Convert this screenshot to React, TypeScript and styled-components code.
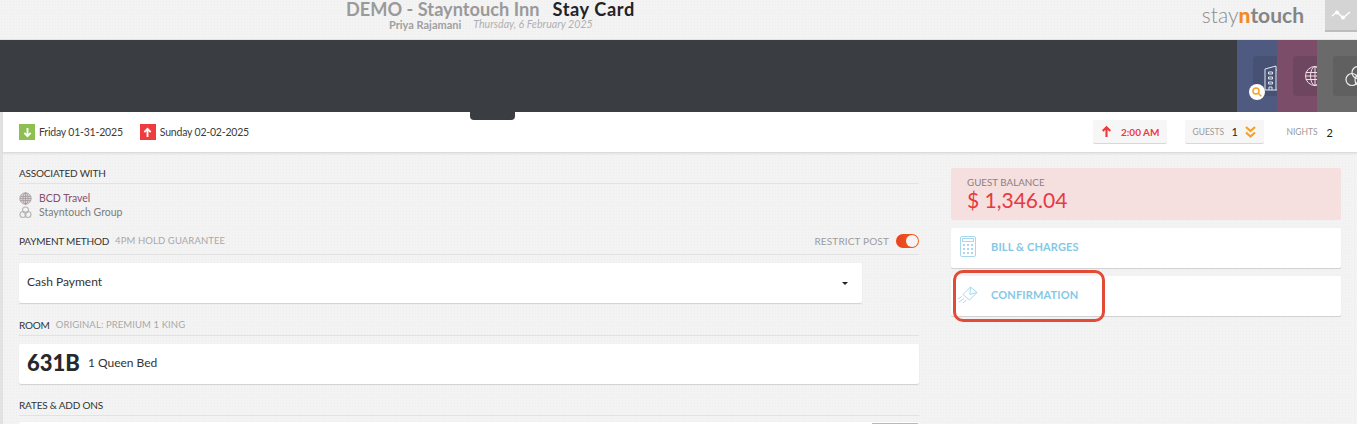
import React from 'react'
import styled, { createGlobalStyle } from 'styled-components'

const FONT = `"Lato", "Noto Sans", sans-serif`

// faint paper grain of the original skin
const GRAIN = `
  background-color: #f3f3f3;
  background-image: radial-gradient(rgba(0, 0, 0, 0.025) 1px, transparent 1px);
  background-size: 3px 3px;
`

const GlobalStyle = createGlobalStyle`
  html, body {
    margin: 0;
    padding: 0;
    background: #f3f3f3;
    overflow: hidden;
  }
  * {
    box-sizing: border-box;
  }
`

const Building = () => (
  <svg width="16" height="26" viewBox="0 0 16 26" fill="none" stroke="#e4e6ee" strokeWidth="1">
    <path d="M1 4 L12 1 V25 H1 Z" />
    <path d="M12 5 H15 V25 H12" />
    <path d="M4.5 7h4v2h-4zM4.5 12h4v2h-4zM4.5 17h4v2h-4zM5 25v-3h3v3" />
  </svg>
)

const Globe = () => (
  <svg width="22" height="22" viewBox="0 0 22 22" fill="none" stroke="#ecdfe6" strokeWidth="1">
    <circle cx="11" cy="11" r="9.5" />
    <ellipse cx="11" cy="11" rx="4.5" ry="9.5" />
    <path d="M11 1.5v19M2 7.5h18M1.5 11h19M2 14.5h18" />
  </svg>
)

const Rings = () => (
  <svg width="24" height="22" viewBox="0 0 24 22" fill="none" stroke="#eeeeee" strokeWidth="1.2">
    <circle cx="14" cy="7.5" r="6" />
    <circle cx="8" cy="14.5" r="6" />
    <circle cx="17" cy="15" r="6" />
  </svg>
)

const SmallGlobe = () => (
  <svg width="13" height="13" viewBox="0 0 13 13" fill="#dcd2d7" stroke="#9a9497" strokeWidth="0.7">
    <circle cx="6.5" cy="6.5" r="5.7" />
    <ellipse cx="6.5" cy="6.5" rx="2.6" ry="5.7" fill="none" />
    <path d="M6.5 .8v11.4M1.2 4.4h10.6M.8 6.5h11.4M1.2 8.6h10.6" fill="none" />
  </svg>
)

const SmallRings = () => (
  <svg width="13" height="13" viewBox="0 0 13 13" fill="none" stroke="#b4b4b4" strokeWidth="1.1">
    <circle cx="6.5" cy="4" r="3" />
    <circle cx="4" cy="8.5" r="3" />
    <circle cx="9" cy="8.5" r="3" />
  </svg>
)

const Calculator = () => (
  <svg width="16" height="21" viewBox="0 0 16 21" fill="none" stroke="#a9d8ee" strokeWidth="1">
    <rect x=".5" y=".5" width="15" height="20" rx="1.5" />
    <rect x="2.5" y="2.5" width="11" height="3" />
    <path
      d="M3 8h2v2H3zM7 8h2v2H7zM11 8h2v2h-2zM3 12h2v2H3zM7 12h2v2H7zM11 12h2v2h-2zM3 16h2v2H3zM7 16h2v2H7zM11 16h2v2h-2z"
      fill="#a9d8ee"
      stroke="none"
    />
  </svg>
)

const Envelope = () => (
  <svg width="21" height="18" viewBox="0 0 21 18" fill="none" stroke="#a9d8ee" strokeWidth="1">
    <path d="M6 8.5 L13.5 1 L20 6.5 L12.5 14 Z" />
    <path d="M13.5 1 L13 8.5 L20 6.5" />
    <path d="M5 10.5 L1 13M7 12.5 L2 16M9.5 14 L6 17" />
  </svg>
)

const ArrowIcon = ({ up, color, size }: { up?: boolean; color: string; size: number }) => (
  <svg width={size} height={size} viewBox="0 0 12 12" fill="none" stroke={color} strokeWidth="2">
    {up ? <path d="M6 11V2M2.5 5.5 6 2l3.5 3.5" /> : <path d="M6 1v9M2.5 6.5 6 10l3.5-3.5" />}
  </svg>
)

const Chevrons = () => (
  <svg width="11" height="12" viewBox="0 0 11 12" fill="none" stroke="#f5a027" strokeWidth="2.2">
    <path d="M1 1l4.5 4L10 1M1 6.5l4.5 4 4.5-4" />
  </svg>
)

const Pulse = () => (
  <svg width="20" height="10" viewBox="0 0 20 10" fill="none" stroke="#fff" strokeWidth="1.4">
    <path d="M1 6 L6 2 L12 8 L19 2" />
    <circle cx="6" cy="2.5" r="1.4" fill="#fff" />
    <circle cx="12" cy="7.5" r="1.4" fill="#fff" />
  </svg>
)

const Search = () => (
  <svg width="10" height="10" viewBox="0 0 10 10" fill="none" stroke="#f5a027" strokeWidth="1.5">
    <circle cx="4" cy="4" r="3" />
    <path d="M6.3 6.3 9.3 9.3" />
  </svg>
)

export default function App() {
  return (
    <>
      <GlobalStyle />
      <Page>
        <Header>
          <TitleBlock>
            <Title>
              <Muted>DEMO - Stayntouch Inn</Muted>
              <Strong>Stay Card</Strong>
            </Title>
            <SubTitle>
              <User>Priya Rajamani</User>
              <DateText>Thursday, 6 February 2025</DateText>
            </SubTitle>
          </TitleBlock>
          <Logo>
            stay<LogoN>n</LogoN>
            <LogoBold>touch</LogoBold>
          </Logo>
          <ActivityButton>
            <Pulse />
          </ActivityButton>
        </Header>

        <Band>
          <Tab $color="#4f5a80">
            <TabInner>
              <Building />
            </TabInner>
            <SearchBadge>
              <Search />
            </SearchBadge>
          </Tab>
          <Tab $color="#7b4d69">
            <TabInner>
              <Globe />
            </TabInner>
          </Tab>
          <Tab $color="#6a6a6b">
            <TabInner>
              <Rings />
            </TabInner>
          </Tab>
        </Band>

        <Body>
          <Strip />
          <Main>
            <DateBar>
              <Handle />
              <DateItem>
                <DateBox $color="#8cc152">
                  <ArrowIcon color="#fff" size={11} />
                </DateBox>
                Friday 01-31-2025
              </DateItem>
              <DateItem>
                <DateBox $color="#ee3b3f">
                  <ArrowIcon up color="#fff" size={11} />
                </DateBox>
                Sunday 02-02-2025
              </DateItem>
              <BarRight>
                <Chip $width={74}>
                  <ArrowIcon up color="#ee3b3f" size={13} />
                  <TimeText>2:00 AM</TimeText>
                </Chip>
                <Chip $width={79}>
                  <BarLabel>GUESTS</BarLabel>
                  <BarValue>1</BarValue>
                  <Chevrons />
                </Chip>
                <Nights>
                  <BarLabel>NIGHTS</BarLabel>
                  <BarValue>2</BarValue>
                </Nights>
              </BarRight>
            </DateBar>

            <Content>
              <LeftColumn>
                <SectionHead $gap={8}>
                  <SectionTitle>ASSOCIATED WITH</SectionTitle>
                </SectionHead>
                <Assoc>
                  <AssocRow $color="#84516f">
                    <SmallGlobe />
                    BCD Travel
                  </AssocRow>
                  <AssocRow $color="#7c7c7c">
                    <SmallRings />
                    Stayntouch Group
                  </AssocRow>
                </Assoc>

                <SectionHead $gap={13} $tall>
                  <SectionTitle>PAYMENT METHOD</SectionTitle>
                  <SectionNote>4PM HOLD GUARANTEE</SectionNote>
                  <Restrict>
                    RESTRICT POST
                    <Toggle>
                      <Knob />
                    </Toggle>
                  </Restrict>
                </SectionHead>
                <SelectCard>
                  Cash Payment
                  <Caret />
                </SelectCard>

                <SectionHead $gap={10}>
                  <SectionTitle>ROOM</SectionTitle>
                  <SectionNote>ORIGINAL: PREMIUM 1 KING</SectionNote>
                </SectionHead>
                <RoomCard>
                  <RoomNumber>631B</RoomNumber>
                  <RoomType>1 Queen Bed</RoomType>
                </RoomCard>

                <SectionHead $gap={9}>
                  <SectionTitle>RATES &amp; ADD ONS</SectionTitle>
                </SectionHead>
                <RatesCard>
                  <RatesButton />
                </RatesCard>
              </LeftColumn>

              <RightColumn>
                <Balance>
                  <BalanceLabel>GUEST BALANCE</BalanceLabel>
                  <BalanceValue>$ 1,346.04</BalanceValue>
                </Balance>
                <ActionCard>
                  <ActionIcon>
                    <Calculator />
                  </ActionIcon>
                  BILL &amp; CHARGES
                </ActionCard>
                <ActionCard>
                  <ActionIcon>
                    <Envelope />
                  </ActionIcon>
                  CONFIRMATION
                  <Highlight />
                </ActionCard>
              </RightColumn>
            </Content>
          </Main>
        </Body>
      </Page>
    </>
  )
}

const Page = styled.div`
  width: 1357px;
  height: 424px;
  overflow: hidden;
  font-family: ${FONT};
  ${GRAIN}
`

const Header = styled.header`
  height: 40px;
  display: flex;
  align-items: flex-start;
  padding-left: 346px;
  border-bottom: 1px solid #e2e2e2;
`

const TitleBlock = styled.div`
  width: 289px;
`

const Title = styled.div`
  display: flex;
  gap: 13px;
  font-size: 18.2px;
  line-height: 18px;
  font-weight: 700;
  white-space: nowrap;
`

const Muted = styled.span`
  color: #9a9a9a;
`

const Strong = styled.span`
  color: #222326;
  letter-spacing: 0.6px;
`

const SubTitle = styled.div`
  display: flex;
  gap: 12px;
  padding: 0 0 0 43px;
  font-size: 11px;
  line-height: 13px;
  white-space: nowrap;
`

const User = styled.span`
  color: #a0a0a0;
  font-weight: 700;
`

const DateText = styled.span`
  font-size: 10.6px;
  color: #b0b0b0;
  font-style: italic;
`

const Logo = styled.div`
  margin-left: auto;
  margin-top: 2px;
  font-size: 21px;
  line-height: 26px;
  font-weight: 300;
  color: #8c8c8c;
`

const LogoN = styled.span`
  color: #f58a1f;
  font-weight: 900;
`

const LogoBold = styled.span`
  color: #858585;
  font-weight: 700;
`

const ActivityButton = styled.div`
  width: 32px;
  height: 32px;
  margin-left: 21px;
  display: flex;
  align-items: center;
  justify-content: center;
  background: #d4d4d4;
  border-bottom: 2px solid #bcbcbc;
`

const Band = styled.div`
  height: 72px;
  display: flex;
  justify-content: flex-end;
  background: #3a3d41;
`

const Tab = styled.div<{ $color: string }>`
  position: relative;
  width: 40px;
  padding: 16px 0 0 16px;
  overflow: hidden;
  background: ${p => p.$color};
`

const TabInner = styled.div`
  width: 40px;
  height: 40px;
  padding: 9px 0 0 11px;
  border-radius: 3px;
  background: rgba(0, 0, 0, 0.09);
`

const SearchBadge = styled.div`
  position: absolute;
  left: 12px;
  top: 44px;
  width: 16px;
  height: 16px;
  display: flex;
  align-items: center;
  justify-content: center;
  border-radius: 50%;
  background: #fff;
`

const Body = styled.div`
  display: flex;
`

const Strip = styled.div`
  width: 3px;
  flex: none;
  height: 312px;
  background: #e2e2e2;
`

const Main = styled.main`
  flex: 1;
  min-width: 0;
`

const DateBar = styled.div`
  position: relative;
  height: 41px;
  display: flex;
  align-items: center;
  gap: 17px;
  padding: 0 16px;
  background: #fff;
  border-bottom: 1px solid #dcdcdc;
  box-shadow: 0 1px 2px rgba(0, 0, 0, 0.07);
`

const Handle = styled.div`
  position: absolute;
  left: 467px;
  top: 0;
  width: 45px;
  height: 8px;
  border-radius: 0 0 4px 4px;
  background: #3a3d41;
`

const DateItem = styled.div`
  display: flex;
  align-items: center;
  gap: 4px;
  font-size: 10.5px;
  letter-spacing: -0.2px;
  color: #3c3c3c;
`

const DateBox = styled.span<{ $color: string }>`
  width: 16px;
  height: 16px;
  display: flex;
  align-items: center;
  justify-content: center;
  background: ${p => p.$color};
`

const BarRight = styled.div`
  margin-left: auto;
  display: flex;
  align-items: center;
  gap: 18px;
  padding-right: 8px;
`

const Chip = styled.div<{ $width: number }>`
  width: ${p => p.$width}px;
  height: 24px;
  display: flex;
  align-items: center;
  justify-content: space-between;
  padding: 0 8px 0 7px;
  border-radius: 2px;
  background: #f6f6f6;
  border-bottom: 1px solid #d8d8d8;
`

const TimeText = styled.span`
  font-size: 10px;
  font-weight: 700;
  color: #ee3b3f;
`

const BarLabel = styled.span`
  font-size: 8.5px;
  color: #9a9a9a;
`

const BarValue = styled.span`
  font-size: 11px;
  color: #222;
`

const Nights = styled.div`
  display: flex;
  align-items: center;
  gap: 9px;
  padding-left: 4px;
`

const Content = styled.div`
  display: flex;
  padding: 0 16px;
`

const LeftColumn = styled.div`
  width: 900px;
`

const SectionHead = styled.div<{ $gap: number; $tall?: boolean }>`
  height: 23px;
  display: flex;
  align-items: flex-end;
  gap: 6px;
  margin-top: ${p => p.$gap}px;
  padding-bottom: ${p => (p.$tall ? 6 : 3)}px;
  border-bottom: 1px solid #e2e2e2;
  line-height: 14px;
  white-space: nowrap;
`

const SectionTitle = styled.span`
  font-size: 10px;
  letter-spacing: -0.2px;
  color: #333;
`

const SectionNote = styled.span`
  font-size: 9.5px;
  letter-spacing: 0.1px;
  color: #a8a8a8;
`

const Restrict = styled.span`
  margin-left: auto;
  display: flex;
  align-items: center;
  gap: 7px;
  font-size: 10px;
  letter-spacing: 0.15px;
  color: #9c9c9c;
`

const Toggle = styled.span`
  position: relative;
  width: 23px;
  height: 14px;
  border-radius: 7px;
  background: linear-gradient(90deg, #e8401e, #f2621f);
`

const Knob = styled.span`
  position: absolute;
  right: 1px;
  top: 1px;
  width: 12px;
  height: 12px;
  border-radius: 50%;
  background: #f4f4f4;
`

const Assoc = styled.div`
  padding-top: 7px;
`

const AssocRow = styled.div<{ $color: string }>`
  height: 14px;
  display: flex;
  align-items: center;
  gap: 7px;
  font-size: 10.5px;
  color: ${p => p.$color};
`

const Card = styled.div`
  display: flex;
  align-items: center;
  background: #fff;
  border-radius: 2px;
  box-shadow: 0 1px 1px rgba(0, 0, 0, 0.14);
`

const SelectCard = styled(Card)`
  position: relative;
  width: 843px;
  height: 40px;
  margin-top: 8px;
  padding: 0 0 3px 8px;
  font-size: 12px;
  color: #333;
`

const Caret = styled.span`
  position: absolute;
  right: 14px;
  top: 19px;
  border-left: 3px solid transparent;
  border-right: 3px solid transparent;
  border-top: 3px solid #222;
`

const RoomCard = styled(Card)`
  height: 40px;
  margin-top: 8px;
  padding: 0 0 3px 8px;
  gap: 8px;
`

const RoomNumber = styled.span`
  font-size: 22px;
  font-weight: 900;
  color: #26282b;
`

const RoomType = styled.span`
  font-size: 12px;
  color: #333;
`

const RatesCard = styled(Card)`
  position: relative;
  height: 40px;
  margin-top: 6px;
`

const RatesButton = styled.span`
  position: absolute;
  left: 853px;
  top: 1px;
  width: 46px;
  height: 20px;
  background: #f6b042;
`

const RightColumn = styled.aside`
  width: 390px;
  margin-left: 32px;
  padding-top: 15px;
`

const Balance = styled.div`
  height: 52px;
  margin-bottom: 8px;
  padding: 8px 16px 0;
  border-radius: 2px;
  background: #f6dfdf;
`

const BalanceLabel = styled.div`
  font-size: 9.8px;
  line-height: 12px;
  color: #8c8080;
`

const BalanceValue = styled.div`
  font-size: 21px;
  line-height: 23px;
  color: #e53b3e;
`

const ActionCard = styled(Card)`
  position: relative;
  height: 40px;
  margin-bottom: 8px;
  padding-bottom: 3px;
  font-size: 11px;
  font-weight: 700;
  letter-spacing: 0.15px;
  color: #85c8e6;
`

const ActionIcon = styled.span`
  width: 40px;
  display: flex;
  justify-content: center;
  padding-right: 7px;
`

const Highlight = styled.span`
  position: absolute;
  left: 2px;
  top: -6px;
  width: 152px;
  height: 52px;
  border: 3px solid #e24c36;
  border-radius: 10px;
`
